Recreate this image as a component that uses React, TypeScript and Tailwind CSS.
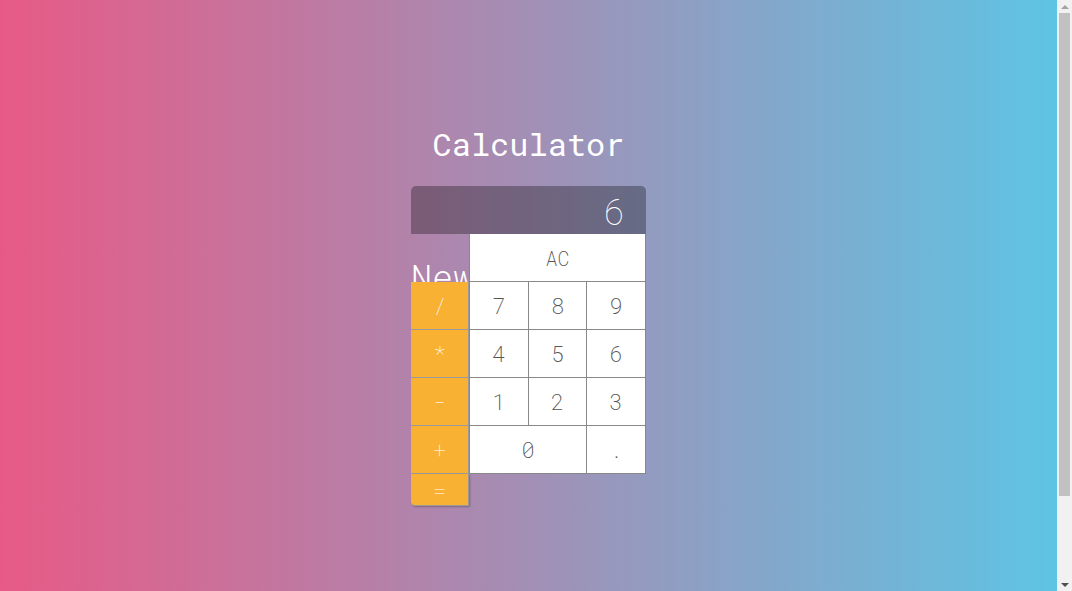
import React from "react";

const FONT = { fontFamily: '"Roboto Mono", "DejaVu Sans Mono", "Liberation Mono", monospace' };

function Key({ label, wide = false }: { label: string; wide?: boolean }) {
  return (
    <button
      className={`h-12 bg-white text-[22px] font-extralight text-[#555] border-r border-b border-[#888] ${
        wide ? "col-span-2" : ""
      }`}
      style={FONT}
    >
      {label}
    </button>
  );
}

function Op({ label, last = false }: { label: string; last?: boolean }) {
  return (
    <button
      className={`w-[58px] bg-[#f8b133] text-white text-[22px] font-thin border-r border-b border-[#999] ${
        last ? "h-8 rounded-bl shadow-[1px_1px_2px_rgba(0,0,0,0.25)]" : "h-12"
      }`}
      style={FONT}
    >
      {label}
    </button>
  );
}

function Scrollbar() {
  return (
    <div className="w-[15px] h-[591px] bg-[#f1f1f1] flex flex-col items-center">
      <div className="h-[13px] flex items-center justify-center">
        <div className="w-0 h-0 border-l-[4px] border-r-[4px] border-b-[4px] border-l-transparent border-r-transparent border-b-[#a3a3a3]" />
      </div>
      <div className="w-[11px] h-[483px] bg-[#c1c1c1]" />
      <div className="flex-1" />
      <div className="h-[13px] flex items-center justify-center">
        <div className="w-0 h-0 border-l-[4px] border-r-[4px] border-t-[4px] border-l-transparent border-r-transparent border-t-[#505050]" />
      </div>
    </div>
  );
}

export default function App() {
  return (
    <div className="flex h-[591px] overflow-hidden" style={FONT}>
      <div className="flex-1 h-[591px] bg-[linear-gradient(to_right,#e75a86,#5ec4e4)] flex justify-center">
        <div className="w-[235px] pt-[124px] flex flex-col">
          <h1 className="text-center text-white text-[32px] font-normal leading-[40px] mb-[22px] -mx-10">
            Calculator
          </h1>
          <div className="h-12 rounded-t-[5px] bg-black/30 flex items-center justify-end pr-[21px] pt-[1px] text-white text-[36px] font-thin">
            6
          </div>
          <div className="flex">
            <div className="flex flex-col w-[58px]">
              <div className="h-12 relative">
                <span className="absolute left-0 top-[25px] text-white text-[35px] font-light leading-none whitespace-nowrap">
                  New
                </span>
              </div>
              <div className="relative flex flex-col">
                <Op label="/" />
                <Op label="*" />
                <Op label="-" />
                <Op label="+" />
                <Op label="=" last />
              </div>
            </div>
            <div className="relative flex-1 grid grid-cols-3 self-start border-l border-[#888]">
              <button
                className="col-span-3 h-12 bg-white text-[20px] font-extralight text-[#555] border-r border-b border-[#888]"
                style={FONT}
              >
                AC
              </button>
              <Key label="7" />
              <Key label="8" />
              <Key label="9" />
              <Key label="4" />
              <Key label="5" />
              <Key label="6" />
              <Key label="1" />
              <Key label="2" />
              <Key label="3" />
              <Key label="0" wide />
              <Key label="." />
            </div>
          </div>
        </div>
      </div>
      <Scrollbar />
    </div>
  );
}
